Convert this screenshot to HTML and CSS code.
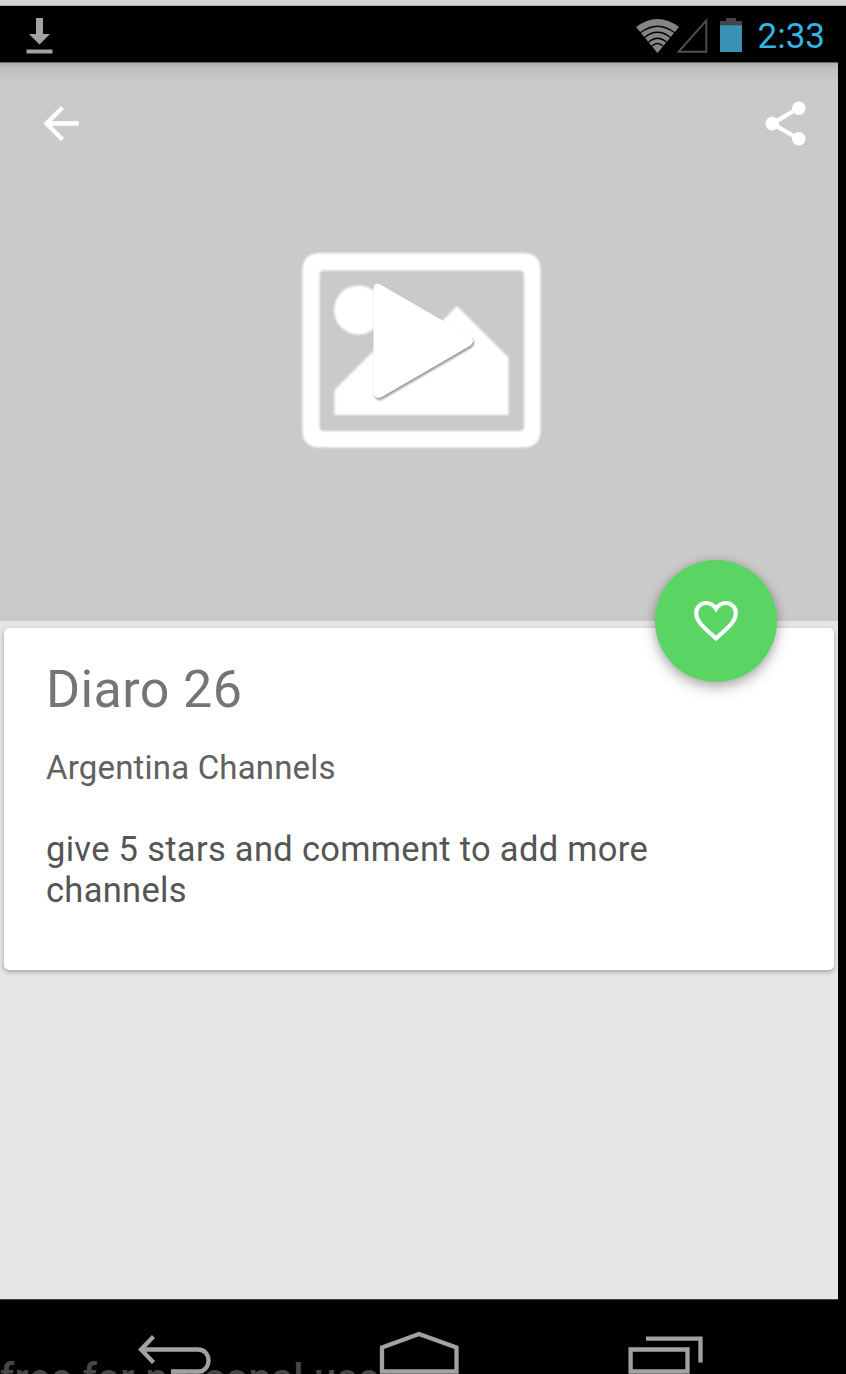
FILE: index.html
```html
<!DOCTYPE html>
<html lang="en">
<head>
<meta charset="utf-8">
<title>Diaro 26</title>
<link rel="stylesheet" href="styles.css">
</head>
<body>
<div class="edge"></div>
<header class="status">
  <svg class="download" width="28" height="37" viewBox="0 0 28 37"><path d="M10 1h7v16h7L13.500 27.500 3 17h7zM.5 32.500h26v4H.5z" fill="#a3a3a3"/></svg>
  <div class="status-right">
    <svg width="108" height="36" viewBox="636 18 108 36">
      <path d="M636 27Q657.500 11 679 27L657.500 53z" fill="#858585"/>
      <g fill="none" stroke="#000" stroke-width="1.400"><path d="M640 33Q657.500 19.500 675 33M644.500 37.500Q657.500 27 670.500 37.500M648.500 42Q657.500 34.500 666.500 42M652 46Q657.500 41 663 46"/></g>
      <path d="M678.500 51.800H706.300V20.500z" fill="none" stroke="#505050" stroke-width="1.900"/>
      <path d="M720 21h6v-3h10v3h6v5h-22z" fill="#454545"/><path d="M720 25.300h22V52h-22z" fill="#3992b5"/>
    </svg>
    <span class="clock">2:33</span>
  </div>
</header>
<main class="screen">
  <section class="hero">
    <div class="toolbar">
      <svg width="38" height="36" viewBox="43 105 38 36"><path d="M78.700 123.500H47M62.500 107.500L46.500 123.500l16 16" fill="none" stroke="#fff" stroke-width="4.300"/></svg>
      <svg width="42" height="46" viewBox="765 101 42 46"><path d="M798.500 108.300L772 123.600l26.500 15" fill="none" stroke="#fff" stroke-width="4.200"/><g fill="#fff"><circle cx="798.800" cy="108.300" r="6.800"/><circle cx="772.200" cy="123.600" r="6.800"/><circle cx="798.800" cy="138.700" r="6.800"/></g></svg>
    </div>
    <svg class="placeholder" width="244" height="200" viewBox="300 250 244 200">
      <g class="picture">
        <path d="M320 253H523Q540.500 253 540.500 271V430Q540.500 447.500 523 447.500H320Q302.500 447.500 302.500 430V271Q302.500 253 320 253zM324 270.500Q319.500 270.500 319.500 275V426.500Q319.500 431 324 431H519.500Q524 431 524 426.500V275Q524 270.500 519.500 270.500z" fill="#fff" fill-rule="evenodd"/>
        <circle cx="358.500" cy="310" r="24.500" fill="#fff"/>
        <path d="M334.500 415V390l53-53 27 12 42.500-43 51.500 51.500V415z" fill="#fff"/>
      </g>
      <path class="play" d="M373.300 290Q373.300 281.500 380.500 284.500L470.500 336.500Q475.500 341 470.500 345.500L381 397.500Q375 399.500 373.300 393z" fill="#fff"/>
    </svg>
    <button class="favorite" aria-label="Add to favorites">
      <svg width="46" height="42" viewBox="0 0 46 42"><path d="M23 38.300C9 26.300 3.200 20.500 3.200 13.200 3.200 7 7.900 3 13.200 3 17.200 3 20.800 5.200 23 8.700 25.200 5.200 28.800 3 32.800 3 38.100 3 42.800 7 42.800 13.200 42.800 20.500 37 26.300 23 38.300z" fill="none" stroke="#fff" stroke-width="4.200"/></svg>
    </button>
  </section>
  <article class="card">
    <h1 class="title">Diaro 26</h1>
    <p class="category">Argentina Channels</p>
    <p class="description">give 5 stars and comment to add more channels</p>
  </article>
</main>
<footer class="nav">
  <span class="watermark">free for personal use</span>
  <svg class="keys" width="838" height="74" viewBox="0 1300 838 74" fill="none" stroke="#a2a2a2" stroke-width="4.300">
    <path d="M142 1349.500H198C212 1349.500 212 1371.500 198 1371.500H171M153.500 1336.500L141 1349.500l12.500 13"/>
    <path d="M382 1371.500V1347.500L419 1334l37.500 13.500V1371.500z"/>
    <path d="M630.600 1349.500H687.500V1371.500H630.600zM646 1338.600H700.500V1362.500"/>
  </svg>
</footer>
</body>
</html>
```
FILE: styles.css
```css
* { box-sizing: border-box; }
body {
  margin: 0;
  height: 1374px;
  display: flex;
  flex-direction: column;
  overflow: hidden;
  background: #000;
  font-family: Roboto, sans-serif;
}
svg { display: block; }
.edge { height: 6px; flex: none; background: #d5d2d5; border-bottom: 1px solid #aaa; }
.status {
  height: 56px;
  flex: none;
  display: flex;
  justify-content: space-between;
  align-items: flex-start;
  padding: 11px 21px 0 26px;
}
.status-right { display: flex; align-items: flex-start; gap: 14px; margin-top: 1px; }
.clock { margin-top: 1px; color: #33b5e5; font-size: 35px; line-height: 36px; white-space: nowrap; }
.screen { width: 838px; height: 1237px; flex: none; background: #e6e6e6; }
.hero {
  position: relative;
  height: 559px;
  display: flex;
  flex-direction: column;
  align-items: center;
  border-top: 1px solid #656365;
  background: linear-gradient(#acacac, #bcbcbc 4px, #c5c5c5 12px, #cacaca 24px);
}
.toolbar {
  width: 100%;
  height: 84px;
  flex: none;
  display: flex;
  justify-content: space-between;
  align-items: flex-end;
  padding: 0 31px 0 43px;
}
.toolbar svg:first-child { margin-bottom: 6px; }
.placeholder { margin: 103px 0 0 6px; }
.picture { filter: blur(1px); }
.play { filter: drop-shadow(1px 2px 1px rgba(0, 0, 0, .42)); }
.favorite {
  position: absolute;
  right: 61px;
  bottom: -61px;
  width: 122px;
  height: 122px;
  display: grid;
  place-items: center;
  padding: 0;
  border: 0;
  border-radius: 50%;
  background: #5ad563;
  box-shadow: 0 6px 14px rgba(0, 0, 0, .26), 0 1px 10px rgba(0, 0, 0, .14);
}
.card {
  height: 342px;
  margin: 7px 4px 0;
  padding: 32px 120px 0 42px;
  border-radius: 5px;
  background: #fff;
  box-shadow: 0 2px 5px rgba(0, 0, 0, .3);
}
.title, .category, .description { margin: 0; font-weight: 400; }
.title { color: #757575; font-size: 52px; line-height: 60px; letter-spacing: .4px; }
.category { margin-top: 28px; color: #616161; font-size: 33px; line-height: 40px; letter-spacing: .18px; }
.description { margin-top: 41px; color: #555; font-size: 34.500px; line-height: 41px; letter-spacing: .3px; }
.nav { position: relative; width: 838px; flex: 1; border-top: 1px solid #444; overflow: hidden; }
.watermark {
  position: absolute;
  left: 0;
  top: 55px;
  color: #484646;
  font-size: 40px;
  font-weight: 500;
  line-height: 48px;
  letter-spacing: .4px;
  white-space: nowrap;
}
.keys { position: relative; }
```
